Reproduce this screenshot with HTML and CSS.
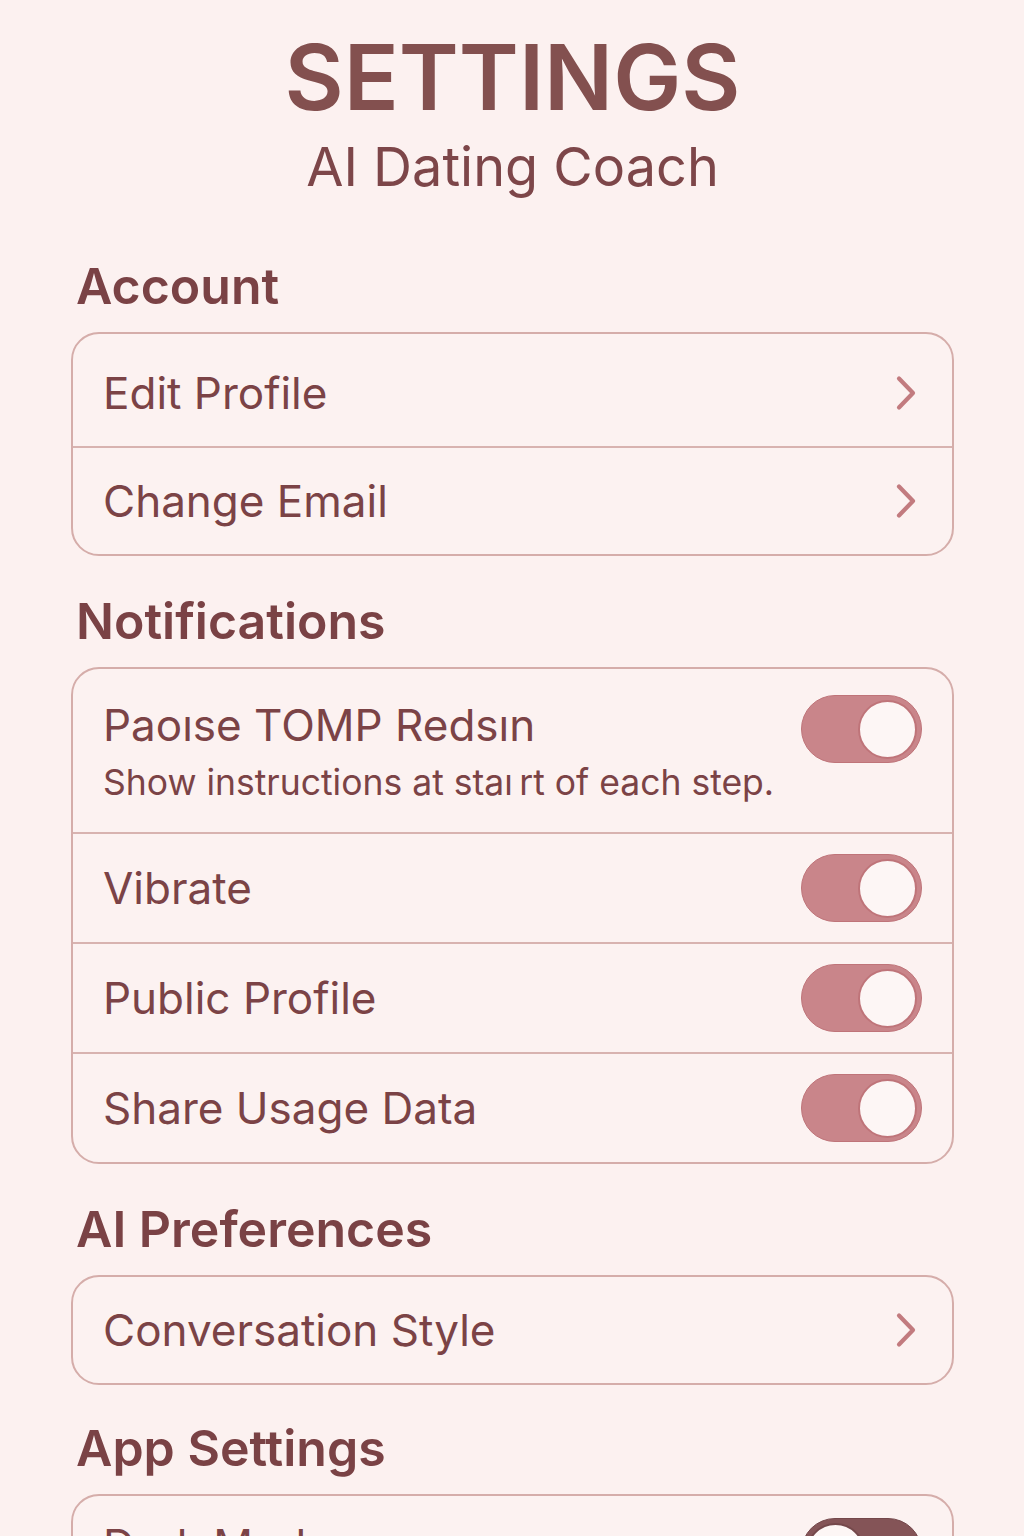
FILE: index.html
```html
<!DOCTYPE html>
<html lang="en">
<head>
<meta charset="utf-8">
<title>Settings</title>
<link rel="stylesheet" href="styles.css">
</head>
<body>
<header class="header">
  <h1 class="title">SETTINGS</h1>
  <p class="subtitle">AI Dating Coach</p>
</header>

<section class="section first">
  <h2 class="section-title">Account</h2>
  <div class="card">
    <div class="row row-lead"><span class="row-label">Edit Profile</span>
      <svg class="chevron" viewBox="0 0 24 40" width="24" height="40"><path d="M5 5.5 L19 20 L5 34.5"/></svg>
    </div>
    <div class="row row-short"><span class="row-label">Change Email</span>
      <svg class="chevron" viewBox="0 0 24 40" width="24" height="40"><path d="M5 5.5 L19 20 L5 34.5"/></svg>
    </div>
  </div>
</section>

<section class="section">
  <h2 class="section-title">Notifications</h2>
  <div class="card">
    <div class="row row-detail">
      <div class="row-text">
        <span class="row-label">Paoıse TOMP Redsın</span>
        <span class="row-sub">Show instructions at staı&thinsp;rt of each step.</span>
      </div>
      <div class="toggle on"><span class="knob"></span></div>
    </div>
    <div class="row"><span class="row-label">Vibrate</span><div class="toggle on"><span class="knob"></span></div></div>
    <div class="row"><span class="row-label">Public Profile</span><div class="toggle on"><span class="knob"></span></div></div>
    <div class="row"><span class="row-label">Share Usage Data</span><div class="toggle on"><span class="knob"></span></div></div>
  </div>
</section>

<section class="section">
  <h2 class="section-title">AI Preferences</h2>
  <div class="card">
    <div class="row"><span class="row-label">Conversation Style</span>
      <svg class="chevron" viewBox="0 0 24 40" width="24" height="40"><path d="M5 5.5 L19 20 L5 34.5"/></svg>
    </div>
  </div>
</section>

<section class="section last">
  <h2 class="section-title">App Settings</h2>
  <div class="card">
    <div class="row row-top"><span class="row-label">Dark Mode</span><div class="toggle off"><span class="knob"></span></div></div>
    <div class="row"><span class="row-label">Language</span>
      <svg class="chevron" viewBox="0 0 24 40" width="24" height="40"><path d="M5 5.5 L19 20 L5 34.5"/></svg>
    </div>
  </div>
</section>
</body>
</html>
```
FILE: styles.css
```css
* { box-sizing: border-box; }

html, body {
  margin: 0;
  padding: 0;
}

body {
  background: #fcf1f0;
  color: #7b4346;
  font-family: Inter, "Noto Sans", "Liberation Sans", sans-serif;
  padding: 0 70px 0 71px;
  overflow: hidden;
  height: 1536px;
}

.header {
  padding-top: 32px;
  text-align: center;
}

.title {
  margin: 0;
  font-size: 91px;
  line-height: 1;
  font-weight: 600;
  color: #83504f;
}

.subtitle {
  margin: 17px 0 0;
  font-size: 54px;
  line-height: 1;
  font-weight: 400;
  color: #7d4649;
}

.section-title {
  margin: 40px 0 20px 5px;
  font-size: 50px;
  line-height: 51px;
  font-weight: 600;
  color: #7a4245;
}

.section.first .section-title {
  margin-top: 67px;
}

.section.last .section-title {
  margin-top: 38px;
}

.card {
  border: 2px solid #d5adaa;
  border-radius: 28px;
  background: #fcf2f1;
}

.row {
  display: flex;
  align-items: center;
  justify-content: space-between;
  height: 106px;
  padding: 0 30px 0 30px;
}

.row + .row {
  border-top: 2px solid #d8b3b0;
  height: 110px;
}

.row.row-lead {
  height: 112px;
  padding-top: 6px;
}

.row.row-short {
  height: 108px;
}

.row-label {
  font-size: 44px;
  line-height: 54px;
  font-weight: 400;
}

.row-detail {
  height: 163px;
  align-items: flex-start;
  padding-top: 26px;
}

.row-text {
  display: flex;
  flex-direction: column;
  padding-top: 3px;
}

.row-sub {
  margin-top: 9px;
  font-size: 35.5px;
  line-height: 43px;
}

.row-top {
  align-items: flex-start;
  padding-top: 22px;
}

.chevron {
  margin-right: 4px;
  fill: none;
  stroke: #c27b7f;
  stroke-width: 4.2;
  stroke-linecap: round;
  stroke-linejoin: round;
}

.toggle {
  width: 121px;
  height: 68px;
  border-radius: 34px;
  padding: 4px;
  display: flex;
  align-items: center;
  flex-shrink: 0;
}

.toggle.on {
  background: #c9858a;
  border: 1.5px solid #bf7479;
  justify-content: flex-end;
}

.toggle.off {
  background: #845457;
  border: 1.5px solid #74484b;
  justify-content: flex-start;
}

.knob {
  width: 59px;
  height: 59px;
  border-radius: 50%;
  background: #fdf6f5;
  border: 2px solid #bf7479;
}

.toggle.off .knob {
  border-color: #74484b;
}
```
